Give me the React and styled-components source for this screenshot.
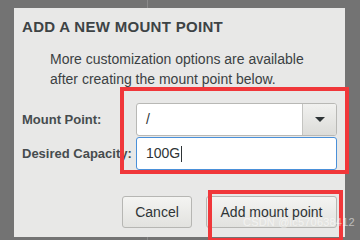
import styled, { createGlobalStyle } from "styled-components";

const GlobalStyle = createGlobalStyle`
  html, body {
    margin: 0;
    padding: 0;
  }
  body {
    width: 360px;
    height: 240px;
    overflow: hidden;
    background: linear-gradient(
      to right,
      #737373 147px,
      #8a8a8a 147px,
      #8a8a8a 148px,
      #737373 148px
    );
    font-family: "Liberation Sans", Arial, sans-serif;
    color: #2e3436;
  }
`;

const Screen = styled.div`
  position: relative;
  width: 360px;
  height: 240px;
  padding: 8px 0 0 14px;
  box-sizing: border-box;
`;

const Dialog = styled.div`
  width: 331px;
  height: 229px;
  background: #e8e8e7;
  box-sizing: border-box;
  padding: 0 8px;
  display: flex;
  flex-direction: column;
`;

const Title = styled.h2`
  margin: 10px 0 0;
  font-size: 15px;
  line-height: 18px;
  font-weight: bold;
  letter-spacing: 0.3px;
  color: #3d4345;
`;

const Note = styled.p`
  margin: 13px 0 0 28px;
  font-size: 14px;
  line-height: 20px;
  color: #3b4143;
`;

const Form = styled.div`
  margin-top: 14px;
  display: grid;
  grid-template-columns: 114px 201px;
  row-gap: 1px;
  align-items: center;
`;

const Label = styled.label`
  font-size: 13px;
  font-weight: bold;
  color: #464c4e;
`;

const Combo = styled.div`
  height: 33px;
  display: flex;
  box-sizing: border-box;
  border: 1px solid #b8b8b5;
  border-radius: 3px;
  background: #fff;
  overflow: hidden;
`;

const ComboText = styled.div`
  flex: 1;
  padding-left: 9px;
  font-size: 14px;
  line-height: 31px;
`;

const ComboButton = styled.div`
  width: 33px;
  border-left: 1px solid #c4c4c1;
  background: linear-gradient(#f1f1ef, #dcdcd9);
  display: flex;
  align-items: center;
  justify-content: center;
`;

const Entry = styled.div`
  height: 33px;
  box-sizing: border-box;
  border: 1px solid #4a90d9;
  border-radius: 3px;
  background: #fff;
  padding-left: 9px;
  font-size: 14px;
  line-height: 31px;
  display: flex;
  align-items: center;
`;

const Caret = styled.span`
  display: inline-block;
  width: 1px;
  height: 16px;
  background: #2e3436;
  margin-left: 1px;
`;

const Actions = styled.div`
  margin-top: auto;
  margin-bottom: 9px;
  display: flex;
  justify-content: flex-end;
  gap: 14px;
`;

const Button = styled.button`
  height: 32px;
  width: ${(p) => p.$w}px;
  box-sizing: border-box;
  border: 1px solid #b6b6b3;
  border-radius: 3px;
  background: linear-gradient(#f4f4f2, #e2e2df);
  font-family: "Liberation Sans", Arial, sans-serif;
  font-size: 14px;
  color: #2e3436;
  padding: 0;
`;

const Highlight = styled.div`
  position: absolute;
  box-sizing: border-box;
  border: 4px solid #f0373a;
  left: ${(p) => p.$x}px;
  top: ${(p) => p.$y}px;
  width: ${(p) => p.$w}px;
  height: ${(p) => p.$h}px;
`;

const Watermark = styled.div`
  position: absolute;
  left: 243px;
  top: 216px;
  font-size: 11px;
  color: rgba(255, 255, 255, 0.55);
  letter-spacing: 0.2px;
`;

export default function App() {
  return (
    <>
      <GlobalStyle />
      <Screen>
        <Dialog>
          <Title>ADD A NEW MOUNT POINT</Title>
          <Note>
            More customization options are available
            <br />
            after creating the mount point below.
          </Note>
          <Form>
            <Label>Mount Point:</Label>
            <Combo>
              <ComboText>/</ComboText>
              <ComboButton>
                <svg width="10" height="5" viewBox="0 0 10 5">
                  <path d="M0 0h10L5 5z" fill="#2e3436" />
                </svg>
              </ComboButton>
            </Combo>
            <Label>Desired Capacity:</Label>
            <Entry>
              100G
              <Caret />
            </Entry>
          </Form>
          <Actions>
            <Button $w={70}>Cancel</Button>
            <Button $w={131}>Add mount point</Button>
          </Actions>
        </Dialog>
        <Highlight $x={120} $y={87} $w={229} $h={87} />
        <Highlight $x={208} $y={190} $w={135} $h={52} />
        <Watermark>CSDN @lc570638412</Watermark>
      </Screen>
    </>
  );
}
